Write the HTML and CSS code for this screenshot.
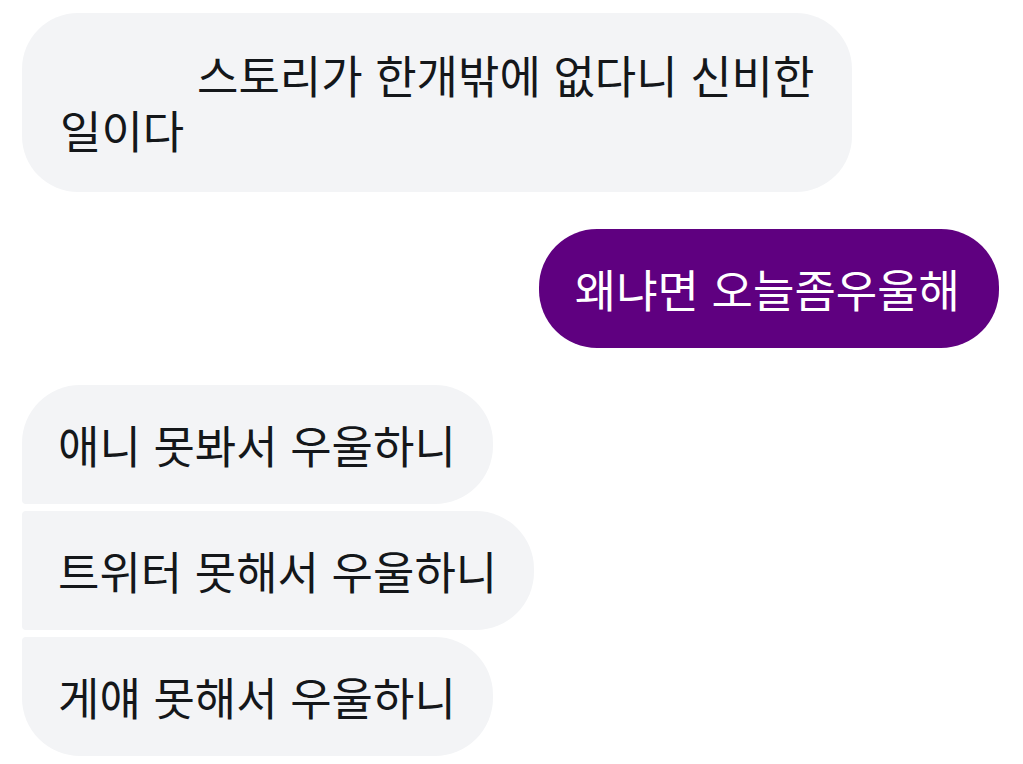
FILE: index.html
```html
<!DOCTYPE html>
<html lang="ko">
<head>
<meta charset="utf-8">
<link rel="stylesheet" href="styles.css">
</head>
<body>
<div class="chat">
  <div class="msg recv single first-msg"><span class="indent">스토리가 한개밖에 없다니 신비한 일이다</span></div>
  <div class="msg sent single">왜냐면 오늘좀우울해</div>
  <div class="group">
    <div class="msg recv top">애니 못봐서 우울하니</div>
    <div class="msg recv mid">트위터 못해서 우울하니</div>
    <div class="msg recv bottom">게얘 못해서 우울하니</div>
  </div>
</div>
</body>
</html>
```
FILE: styles.css
```css
html, body {
  margin: 0;
  padding: 0;
  background: #ffffff;
}
body {
  font-family: "Noto Sans CJK KR", "Noto Sans", sans-serif;
  color: #14171a;
}
.chat {
  display: flex;
  flex-direction: column;
  padding: 13px 24px 0 22px;
}
.msg {
  font-size: 45px;
  line-height: 55px;
  padding: 32px 37px 32px 36px;
  border-radius: 58px;
  box-sizing: border-box;
  word-break: keep-all;
  white-space: nowrap;
}
.recv {
  align-self: flex-start;
  background: #f3f4f6;
}
.first-msg {
  width: 830px;
  white-space: normal;
  padding: 34px 20px 35px 38px;
  border-radius: 56px;
}
.indent {
  display: block;
  text-indent: 137px;
}
.sent {
  align-self: flex-end;
  background: #5f0080;
  color: #ffffff;
  margin-top: 37px;
  padding: 32px 39px 32px 36px;
}
.group {
  display: flex;
  flex-direction: column;
  align-items: flex-start;
  gap: 7px;
  margin-top: 37px;
}
.top {
  border-bottom-left-radius: 4px;
}
.mid {
  border-top-left-radius: 4px;
  border-bottom-left-radius: 4px;
}
.bottom {
  border-top-left-radius: 4px;
}
```
